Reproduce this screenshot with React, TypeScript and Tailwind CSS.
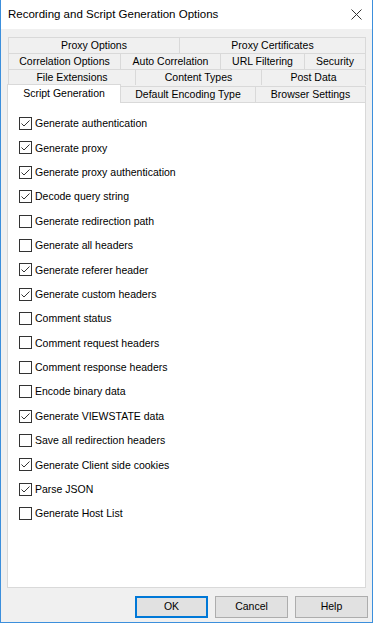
import React from "react";

type Tab = { label: string; w: string };

const row1: Tab[] = [
  { label: "Proxy Options", w: "w-[171px]" },
  { label: "Proxy Certificates", w: "w-[187px]" },
];
const row2: Tab[] = [
  { label: "Correlation Options", w: "w-[112px]" },
  { label: "Auto Correlation", w: "w-[100px]" },
  { label: "URL Filtering", w: "w-[84px]" },
  { label: "Security", w: "w-[62px]" },
];
const row3: Tab[] = [
  { label: "File Extensions", w: "w-[127px]" },
  { label: "Content Types", w: "w-[126px]" },
  { label: "Post Data", w: "w-[105px]" },
];

const options: [string, boolean][] = [
  ["Generate authentication", true],
  ["Generate proxy", true],
  ["Generate proxy authentication", true],
  ["Decode query string", true],
  ["Generate redirection path", false],
  ["Generate all headers", false],
  ["Generate referer header", true],
  ["Generate custom headers", true],
  ["Comment status", false],
  ["Comment request headers", false],
  ["Comment response headers", false],
  ["Encode binary data", false],
  ["Generate VIEWSTATE data", true],
  ["Save all redirection headers", false],
  ["Generate Client side cookies", true],
  ["Parse JSON", true],
  ["Generate Host List", false],
];

function TabRow({ tabs }: { tabs: Tab[] }) {
  return (
    <div className="ml-px flex h-[16px]">
      {tabs.map((t, i) => (
        <div
          key={t.label}
          className={`${t.w} flex h-[16px] items-center justify-center border-l border-t border-[#d9d9d9] bg-[#f0f0f0] ${
            i === tabs.length - 1 ? "border-r" : ""
          }`}
        >
          {t.label}
        </div>
      ))}
    </div>
  );
}

function CheckBox({ checked }: { checked: boolean }) {
  return (
    <div className="flex h-[13px] w-[13px] shrink-0 items-center justify-center border border-[#333333] bg-white">
      {checked && (
        <svg width="11" height="11" viewBox="0 0 11 11">
          <polyline points="1.5,5.5 4,8 9.5,2.5" fill="none" stroke="#333333" strokeWidth="1" />
        </svg>
      )}
    </div>
  );
}

export default function App() {
  return (
    <div className="h-[626px] w-[374px] bg-white font-['Liberation_Sans',Arial,sans-serif] text-black">
      <div className="flex h-[623px] w-[373px] flex-col border-x border-b border-[#3c8fdc]">
        {/* Title bar */}
        <div className="flex h-[29px] shrink-0 items-center justify-between bg-white pl-[7px] pr-[10px]">
          <span className="text-[11.5px]">Recording and Script Generation Options</span>
          <svg width="11" height="11" viewBox="0 0 11 11">
            <path d="M0.5 0.5 L10.5 10.5 M10.5 0.5 L0.5 10.5" stroke="#333" strokeWidth="1" />
          </svg>
        </div>

        {/* Body */}
        <div className="flex flex-1 flex-col bg-[#f0f0f0] pt-[8px] text-[10.5px]">
          <div className="ml-[6px] flex w-[359px] flex-col">
            <TabRow tabs={row1} />
            <TabRow tabs={row2} />
            <TabRow tabs={row3} />
            <div className="flex h-[17px] items-end">
              <div className="relative z-10 -mb-px flex h-[19px] w-[114px] items-center justify-center border-x border-t border-[#d9d9d9] bg-white">
                Script Generation
              </div>
              <div className="flex h-[16px] w-[134px] items-center justify-center border-t border-[#d9d9d9] bg-[#f0f0f0]">
                Default Encoding Type
              </div>
              <div className="flex h-[16px] w-[111px] items-center justify-center border-x border-t border-[#d9d9d9] bg-[#f0f0f0]">
                Browser Settings
              </div>
            </div>

            {/* Panel */}
            <div className="flex h-[486px] flex-col gap-[11.375px] border border-[#d9d9d9] bg-white pl-[11px] pt-[14px]">
              {options.map(([label, checked]) => (
                <div key={label} className="flex h-[13px] items-center gap-[3px] leading-none">
                  <CheckBox checked={checked} />
                  <span>{label}</span>
                </div>
              ))}
            </div>
          </div>

          {/* Buttons */}
          <div className="mt-[8px] flex justify-end gap-[7px] pr-[4px]">
            <button className="h-[22px] w-[73px] border border-[#0078d7] bg-[#e1e1e1] shadow-[inset_0_0_0_1px_#0078d7]">
              OK
            </button>
            <button className="h-[22px] w-[73px] border border-[#adadad] bg-[#e1e1e1]">Cancel</button>
            <button className="h-[22px] w-[73px] border border-[#adadad] bg-[#e1e1e1]">Help</button>
          </div>
        </div>
      </div>
    </div>
  );
}
